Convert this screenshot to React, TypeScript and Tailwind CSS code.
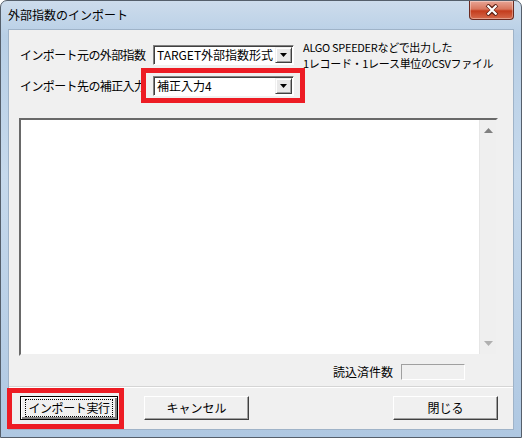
const jp = { fontFamily: '"Noto Sans CJK JP", "Liberation Sans", sans-serif' };

const DropArrow = () => (
  <div className="flex h-full w-[17px] items-center justify-center border border-t-[#f0f0f0] border-l-[#f0f0f0] border-r-[#404040] border-b-[#404040] bg-[#e9e9e9] shadow-[inset_1px_1px_0_#ffffff,inset_-1px_-1px_0_#a0a0a0]">
    <svg width="7" height="4" viewBox="0 0 7 4">
      <path d="M0 0h7L3.5 4z" fill="#000" />
    </svg>
  </div>
);

const Select = ({ value }: { value: string }) => (
  <div className="flex h-[20px] w-[141px] items-stretch border border-t-[#808080] border-l-[#808080] border-r-[#ffffff] border-b-[#ffffff] bg-white p-[1px] shadow-[inset_1px_1px_0_#404040]">
    <div className="flex flex-1 items-center pl-[2px] text-[12px] leading-none text-black">{value}</div>
    <DropArrow />
  </div>
);

const Button = ({ label, width, isDefault }: { label: string; width: string; isDefault?: boolean }) => (
  <div
    className={`flex h-[24px] ${width} items-center justify-center bg-[#f0f0f0] text-[12px] text-black ${
      isDefault
        ? "border border-black shadow-[inset_1px_1px_0_#ffffff,inset_-2px_-2px_0_#808080]"
        : "border border-t-[#ffffff] border-l-[#ffffff] border-r-[#404040] border-b-[#404040] shadow-[inset_-1px_-1px_0_#a0a0a0]"
    }`}
  >
    {isDefault ? (
      <div className="flex h-[18px] w-[88px] items-center justify-center border border-dotted border-black tracking-[-0.4px]">{label}</div>
    ) : (
      label
    )}
  </div>
);

export default function App() {
  return (
    <div
      className="relative h-[438px] w-[522px] overflow-hidden rounded-t-[7px] border border-[#555f6b] bg-[linear-gradient(180deg,#cddcec_0%,#b8cfe6_8%,#c6d9ec_40%,#afc8e2_100%)]"
      style={jp}
    >
      {/* title bar */}
      <div className="flex h-[28px] items-start justify-between">
        <div className="pl-[7px] pt-[6px] text-[12px] leading-[16px] text-black">外部指数のインポート</div>
        <div className="mr-[7px] flex h-[19px] w-[45px] items-center justify-center rounded-b-[4px] border border-t-0 border-[#6b2a20] bg-[linear-gradient(180deg,#e8a595_0%,#d8765d_45%,#c43c1d_55%,#d56a4c_100%)] shadow-[inset_0_0_0_1px_rgba(255,255,255,0.35)]">
          <svg width="14" height="12" viewBox="0 0 14 12">
            <path d="M2 1l5 4.2L12 1M2 11l5-4.2L12 11" stroke="#5a1d12" strokeWidth="4" fill="none" />
            <path d="M2.5 1.5l4.5 4.5 4.5-4.5M2.5 10.5L7 6l4.5 4.5" stroke="#ffffff" strokeWidth="2.2" fill="none" />
          </svg>
        </div>
      </div>

      {/* client area */}
      <div className="mx-[7px] flex h-[401px] flex-col border border-[#9fb3c8] bg-[#f0f0f0]">
        {/* row 1 */}
        <div className="ml-[11px] mt-[15px] flex h-[20px] items-center">
          <div className="flex h-[20px] w-[133px] items-center text-[12px] tracking-[-0.6px] text-black">インポート元の外部指数</div>
          <Select value="TARGET外部指数形式" />
          <div className="ml-[9px] text-[11px] leading-[16px] tracking-[-0.3px] text-black">
            <div>ALGO SPEEDERなどで出力した</div>
            <div>1レコード・1レース単位のCSVファイル</div>
          </div>
        </div>

        {/* row 2 */}
        <div className="ml-[11px] mt-[11px] flex items-start">
          <div className="flex h-[20px] w-[133px] items-center text-[12px] tracking-[-0.6px] text-black">インポート先の補正入力</div>
          <Select value="補正入力4" />
        </div>

        {/* list box */}
        <div className="ml-[10px] mt-[22px] flex h-[238px] w-[479px] border-2 border-t-[#696969] border-l-[#696969] border-r-[#f0f0f0] border-b-[#f0f0f0] bg-white">
          <div className="flex-1" />
          <div className="flex w-[17px] flex-col items-center justify-between border-l border-[#e6e6e6] bg-[#efefef] py-[8px]">
            <svg width="9" height="5" viewBox="0 0 9 5">
              <path d="M0 5L4.5 0L9 5z" fill="#808080" />
            </svg>
            <svg width="9" height="5" viewBox="0 0 9 5">
              <path d="M0 0h9L4.5 5z" fill="#b0b0b0" />
            </svg>
          </div>
        </div>

        {/* count */}
        <div className="mr-[48px] mt-[8px] flex items-center justify-end">
          <span className="text-[12px] leading-none text-black">読込済件数</span>
          <div className="ml-[8px] h-[16px] w-[64px] border border-t-[#a0a0a0] border-l-[#a0a0a0] border-r-[#ffffff] border-b-[#ffffff] bg-[#f0f0f0]" />
        </div>

        {/* separator */}
        <div className="mt-[6px] h-[2px] border-t border-b border-t-[#d5d5d5] border-b-[#ffffff]" />

        {/* buttons */}
        <div className="ml-[11px] mr-[15px] mt-[8px] flex items-center">
          <Button label="インポート実行" width="w-[98px]" isDefault />
          <div className="ml-[26px]">
            <Button label="キャンセル" width="w-[105px]" />
          </div>
          <div className="ml-auto">
            <Button label="閉じる" width="w-[105px]" />
          </div>
        </div>
      </div>

      {/* annotation boxes */}
      <div className="absolute left-[140px] top-[67px] h-[35px] w-[164px] border-[5px] border-[#ed1c24]" />
      <div className="absolute left-[6px] top-[387px] h-[41px] w-[117px] border-[5px] border-[#ed1c24]" />
    </div>
  );
}
